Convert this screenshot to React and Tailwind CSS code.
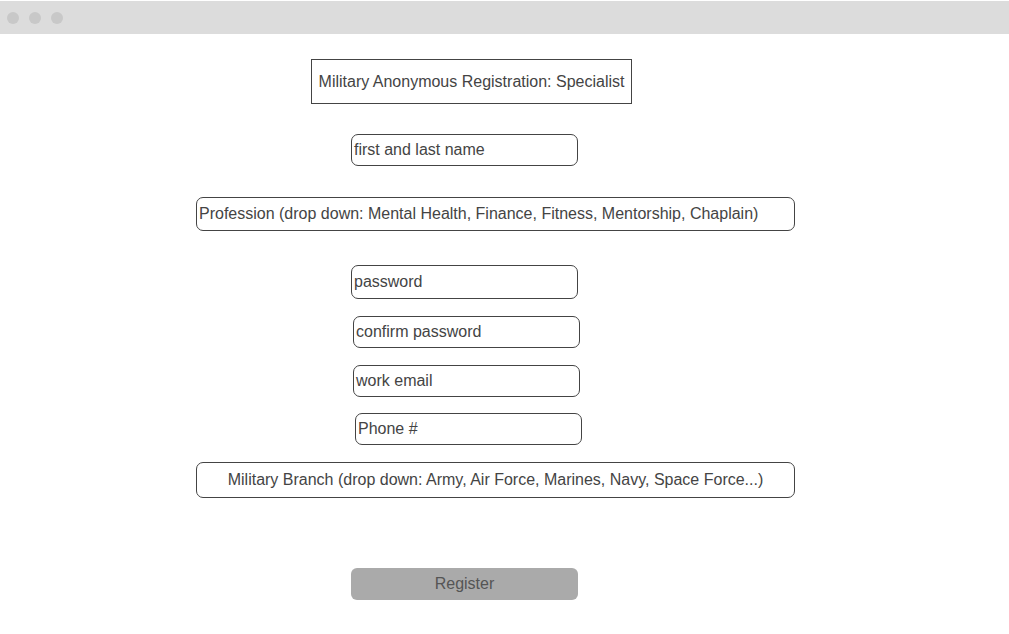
import React from 'react';

function Field({className, children}) {
    return (
        <div className={`h-[32px] w-[227px] flex items-center rounded-[7px] border border-[#444] pl-[2px] text-[16px] text-[#444] ${className}`}>
            {children}
        </div>
    );
}

export default function App() {
    return (
        <div className="min-h-[634px] w-[1009px] bg-white font-['Liberation_Sans',Arial,sans-serif]">
            {/* window chrome */}
            <div className="h-[34px] border-t border-white bg-[#dcdcdc] flex items-center gap-[10px] pl-[7px]">
                <span className="h-[12px] w-[12px] rounded-full bg-[#c8c8c8]"/>
                <span className="h-[12px] w-[12px] rounded-full bg-[#c8c8c8]"/>
                <span className="h-[12px] w-[12px] rounded-full bg-[#c8c8c8]"/>
            </div>

            <div className="flex flex-col">
                <div className="ml-[311px] mt-[25px] h-[45px] w-[321px] flex items-center justify-center border border-[#444] text-[16px] text-[#444]">
                    Military Anonymous Registration: Specialist
                </div>

                <Field className="ml-[351px] mt-[30px]">first and last name</Field>

                <div className="ml-[196px] mt-[31px] h-[34px] w-[599px] flex items-center rounded-[7px] border border-[#444] pl-[2px] text-[16px] text-[#444]">
                    Profession (drop down: Mental Health, Finance, Fitness, Mentorship, Chaplain)
                </div>

                <Field className="ml-[351px] mt-[34px] h-[34px]">password</Field>
                <Field className="ml-[353px] mt-[17px]">confirm password</Field>
                <Field className="ml-[353px] mt-[17px]">work email</Field>
                <Field className="ml-[355px] mt-[16px]">Phone #</Field>

                <div className="ml-[196px] mt-[17px] h-[36px] w-[599px] flex items-center justify-center rounded-[7px] border border-[#444] text-[16px] text-[#444]">
                    Military Branch (drop down: Army, Air Force, Marines, Navy, Space Force...)
                </div>

                <button className="ml-[351px] mt-[70px] h-[32px] w-[227px] rounded-[6px] bg-[#aaaaaa] text-[16px] text-[#555]">
                    Register
                </button>
            </div>
        </div>
    );
}
